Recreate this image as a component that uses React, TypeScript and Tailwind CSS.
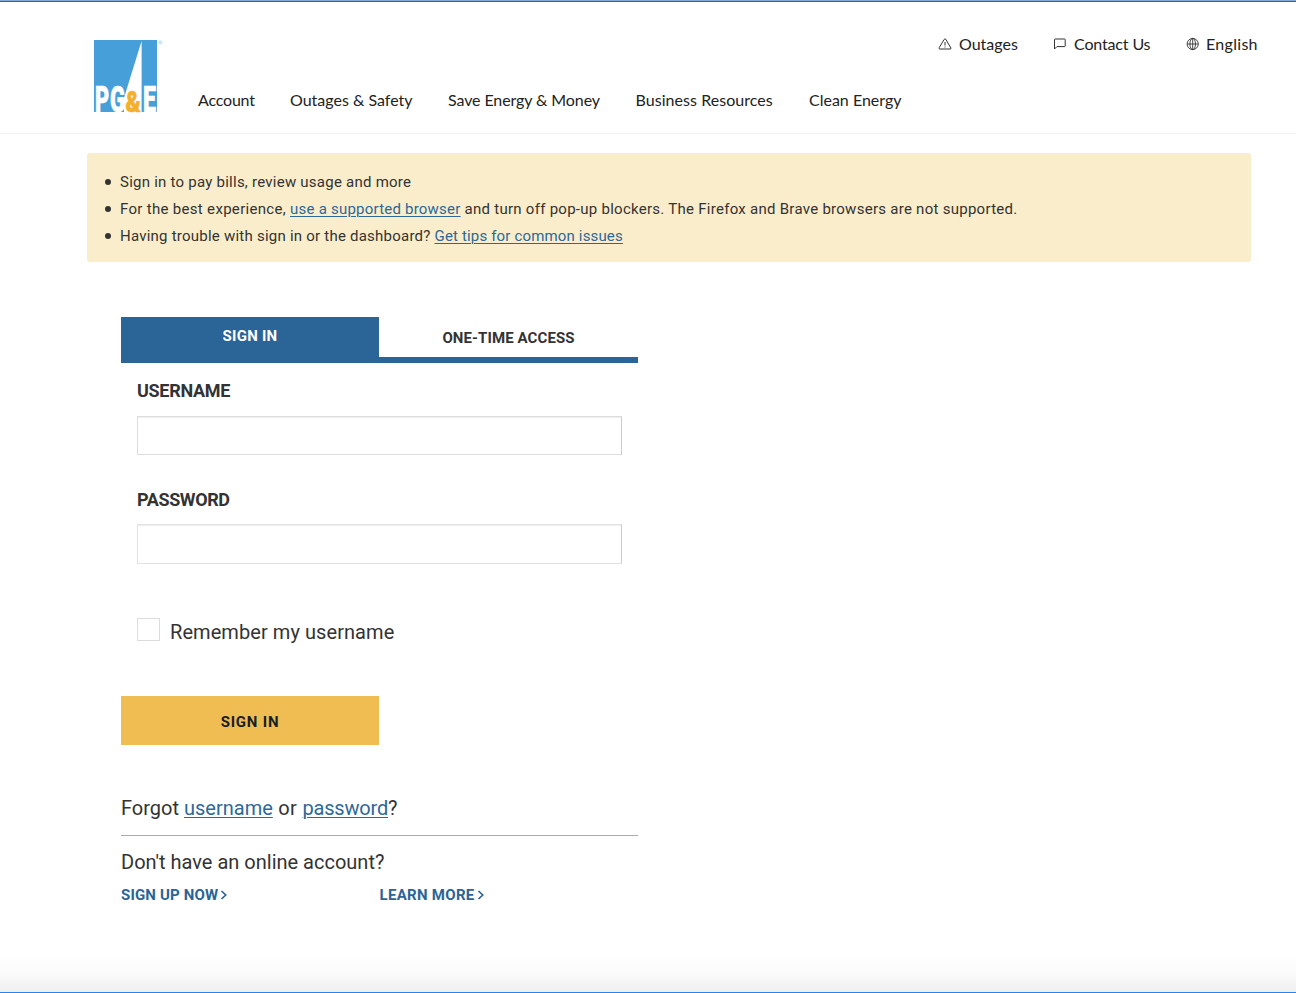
import type { ReactNode } from "react";

function Logo() {
  return (
    <svg width="70" height="74" viewBox="0 0 70 74" className="block overflow-visible">
      <rect width="63" height="72" fill="#479fd9" />
      <path d="M47.6 1V72H30V58L34 45Z" fill="#fff" />
      <g fontFamily="Roboto, sans-serif" fontWeight="900" fontSize="37" fill="#fff" stroke="#fff" strokeWidth="0.7">
        <text x="1.1" y="72" textLength="14.2" lengthAdjust="spacingAndGlyphs">P</text>
        <text x="15.9" y="72" textLength="15" lengthAdjust="spacingAndGlyphs">G</text>
        <text x="48.9" y="72" textLength="13" lengthAdjust="spacingAndGlyphs">E</text>
        <text x="31.6" y="71.6" fontSize="29.5" fill="#f3b02d" stroke="#f3b02d" strokeWidth="0.7" textLength="15.3" lengthAdjust="spacingAndGlyphs">&amp;</text>
      </g>
      <circle cx="66.4" cy="2.4" r="1.6" fill="none" stroke="#9fcbe8" strokeWidth="0.7" />
      <circle cx="66.4" cy="2.4" r="0.5" fill="#9fcbe8" />
    </svg>
  );
}

function WarningIcon() {
  return (
    <svg width="14" height="14" viewBox="0 0 14 14" fill="none" stroke="#333" strokeWidth="1" strokeLinejoin="round" strokeLinecap="round">
      <path d="M6.3 2.2Q7 1.2 7.7 2.2L12.9 11Q13.3 12 12.3 12H1.7Q.7 12 1.1 11Z" />
      <path d="M7 5.4V8.1M7 9.9V10.1" />
    </svg>
  );
}

function ChatIcon() {
  return (
    <svg width="14" height="14" viewBox="0 0 14 14" fill="none" stroke="#333" strokeWidth="1" strokeLinejoin="round">
      <path d="M2 2H11.6Q12.2 2 12.2 2.6V9Q12.2 9.6 11.6 9.6H3.9L1.5 12V2.6Q1.5 2 2 2Z" />
    </svg>
  );
}

function GlobeIcon() {
  return (
    <svg width="14" height="14" viewBox="0 0 14 14" fill="none" stroke="#333" strokeWidth="0.9">
      <circle cx="6.7" cy="7" r="5.6" />
      <ellipse cx="6.7" cy="7" rx="2.8" ry="5.6" />
      <path d="M1.1 7H12.3M6.7 1.4V12.6" />
    </svg>
  );
}

function Chevron() {
  return (
    <svg width="8" height="10" viewBox="0 0 8 10" fill="none" stroke="#2b6496" strokeWidth="1.7" className="ml-0.5">
      <path d="M1.5 1L5.7 5L1.5 9" />
    </svg>
  );
}

function Link({ children }: { children: ReactNode }) {
  return (
    <a href="#" className="text-[#2d6898] underline decoration-1 underline-offset-2">
      {children}
    </a>
  );
}

function Bullet() {
  return <span className="mb-0.5 size-1.5 rounded-full bg-[#333]" />;
}

export default function App() {
  return (
    <div className="flex h-[993px] w-[1296px] flex-col overflow-hidden border-b border-[#2684f0] bg-white font-['Roboto','Liberation_Sans',sans-serif] text-[#333]">
      <div className="h-0.5 shrink-0 border-b border-[#2765ae] bg-[#84a9d4]" />
      <header className="flex h-[132px] shrink-0 border-b border-[#f3f3f3] pl-[94px] font-['Lato','Liberation_Sans',sans-serif] text-[16px] leading-5 text-[#222]">
        <div className="w-[104px] shrink-0 pt-[38px]">
          <Logo />
        </div>
        <div className="flex grow flex-col">
          <div className="flex pt-[32px] pl-[740px] whitespace-nowrap">
            <a className="flex w-[115px] items-center gap-[7px]"><WarningIcon />Outages</a>
            <a className="flex w-[133px] items-center gap-[7px] tracking-[-0.15px]"><ChatIcon />Contact Us</a>
            <a className="flex items-center gap-[6px] tracking-[0.3px]"><GlobeIcon />English</a>
          </div>
          <nav className="flex pt-[36px] whitespace-nowrap">
            <a className="w-[92px] tracking-[-0.2px]">Account</a>
            <a className="w-[158px]">Outages &amp; Safety</a>
            <a className="w-[187.5px] tracking-[-0.1px]">Save Energy &amp; Money</a>
            <a className="w-[173.5px] tracking-[0.05px]">Business Resources</a>
            <a>Clean Energy</a>
          </nav>
        </div>
      </header>

      <section className="mt-[19px] ml-[87px] h-[109px] w-[1164px] shrink-0 rounded-[3px] bg-[#faedcb] pt-4 pl-[18px]">
        <ul className="text-[15px] leading-[27px] tracking-[0.24px]">
          <li className="flex items-center gap-[9px]"><Bullet /><p>Sign in to pay bills, review usage and more</p></li>
          <li className="flex items-center gap-[9px]"><Bullet /><p><span className="tracking-[0.31px]">For the best experience, </span><span className="tracking-[0.22px]"><Link>use a supported browser</Link></span><span className="tracking-[0.27px]"> and turn off pop-up blockers. The Firefox and Brave browsers are not supported.</span></p></li>
          <li className="flex items-center gap-[9px]"><Bullet /><p><span className="tracking-[0.23px]">Having trouble with sign in or the dashboard? </span><span className="tracking-[0.16px]"><Link>Get tips for common issues</Link></span></p></li>
        </ul>
      </section>

      <main className="mt-[55px] ml-[121px] flex w-[517px] shrink-0 flex-col">
        <div className="flex h-[46px] border-b-[6px] border-[#2b6496] text-[15px] leading-5 font-bold tracking-[0.1px]">
          <button className="w-[258px] bg-[#2b6496] pb-[3px] tracking-[0.25px] text-white">SIGN IN</button>
          <button className="w-[259px] pt-px">ONE-TIME ACCESS</button>
        </div>
        <form className="flex flex-col px-4">
          <label className="mt-[18px] text-[18px] leading-5 font-bold tracking-[-0.3px]">USERNAME</label>
          <input className="mt-[15px] h-[39px] w-[485px] border border-[#ddd] border-r-[#ccc] shadow-[inset_0_1px_1px_#eee]" />
          <label className="mt-[35px] text-[18px] leading-5 font-bold tracking-[-0.4px]">PASSWORD</label>
          <input className="mt-[14px] h-10 w-[485px] border border-[#e2e2e2] border-r-[#ccc] shadow-[inset_0_1px_1px_#eee]" />
          <label className="mt-[54px] flex h-6 gap-[10px] text-[20px] leading-7 tracking-[0.07px]">
            <span className="size-[23px] border border-[#ddd]" />
            Remember my username
          </label>
        </form>
        <button className="mt-[54px] h-[49px] w-[258px] bg-[#f0bd53] pt-[3px] text-[15px] font-bold tracking-[0.8px] text-[#15202a]">SIGN IN</button>
        <p className="mt-[49px] text-[20px] leading-7">Forgot <Link>username</Link><span className="tracking-[0.4px]"> or </span><span className="tracking-[-0.2px]"><Link>password</Link>?</span></p>
        <hr className="mt-[13px] border-[#aaa]" />
        <p className="mt-[12px] text-[20px] leading-7">Don't have an online account?</p>
        <div className="mt-[9px] flex text-[15px] leading-5 font-bold tracking-[0.17px] text-[#2b6496]">
          <a className="flex w-[258.5px] items-center">SIGN UP NOW<Chevron /></a>
          <a className="flex items-center tracking-[0.3px]">LEARN MORE<Chevron /></a>
        </div>
      </main>
      <div className="mt-auto h-[40px] shrink-0 bg-linear-to-b from-white via-[#fbfbfb] to-[#efefef]" />
    </div>
  );
}
